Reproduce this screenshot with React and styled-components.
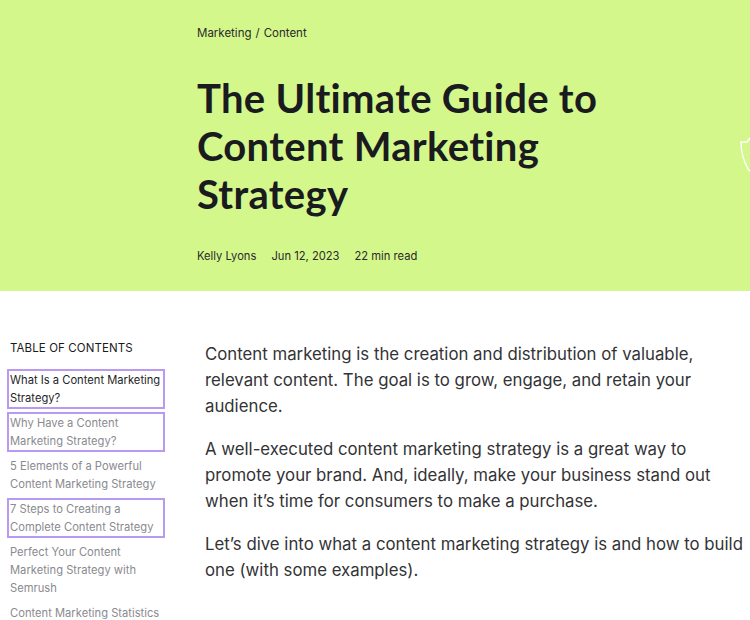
import styled, { createGlobalStyle } from "styled-components";

const GlobalStyle = createGlobalStyle`
  body {
    margin: 0;
    background: #fff;
    font-family: Inter, "Noto Sans", sans-serif;
    overflow: hidden;
  }
`;

const Hero = styled.header`
  position: relative;
  height: 291px;
  background: #d4f78c;
  padding: 26px 0 0 197px;
  box-sizing: border-box;
  overflow: hidden;
`;

const Breadcrumb = styled.div`
  font-size: 11.5px;
  color: #2a2a2a;
  display: flex;
  gap: 4px;
`;

const Title = styled.h1`
  margin: 34px 0 0;
  font-family: Lato, Inter, sans-serif;
  font-weight: 700;
  font-size: 40px;
  line-height: 48px;
  color: #1a1b1f;
  width: 460px;
  letter-spacing: 0.3px;
`;

const Meta = styled.div`
  margin-top: 31px;
  display: flex;
  gap: 15px;
  font-size: 11.2px;
  color: #2a2a2a;
`;

const Decoration = styled.svg`
  position: absolute;
  right: 0;
  top: 136px;
`;

const Main = styled.main`
  display: grid;
  grid-template-columns: 158px 1fr;
  gap: 40px;
  padding: 50px 0 0 7px;
`;

const TocTitle = styled.div`
  font-size: 11.5px;
  color: #1a1a1a;
  letter-spacing: 0.1px;
  padding-left: 3px;
  margin-bottom: 14px;
`;

const TocList = styled.ul`
  list-style: none;
  margin: 0;
  padding: 0;
  display: flex;
  flex-direction: column;
  gap: 3px;
`;

const TocItem = styled.li`
  font-size: 11.2px;
  line-height: 18px;
  color: ${(p) => (p.$active ? "#1f1f1f" : "#8a8a8f")};
  padding: 0 1px;
  border: 2px solid ${(p) => (p.$boxed ? "#b99af2" : "transparent")};
`;

const Article = styled.article`
  padding-top: 0;
`;

const Paragraph = styled.p`
  margin: 0 0 17px;
  font-size: 16.8px;
  line-height: 26px;
  color: #333336;
  max-width: 542px;
`;

const toc = [
  { text: "What Is a Content Marketing Strategy?", active: true, boxed: true },
  { text: "Why Have a Content Marketing Strategy?", boxed: true },
  { text: "5 Elements of a Powerful Content Marketing Strategy" },
  { text: "7 Steps to Creating a Complete Content Strategy", boxed: true },
  { text: "Perfect Your Content Marketing Strategy with Semrush" },
  { text: "Content Marketing Statistics" },
];

export default function App() {
  return (
    <>
      <GlobalStyle />
      <Hero>
        <Breadcrumb>
          <span>Marketing</span>
          <span>/</span>
          <span>Content</span>
        </Breadcrumb>
        <Title>The Ultimate Guide to Content Marketing Strategy</Title>
        <Meta>
          <span>Kelly Lyons</span>
          <span>Jun 12, 2023</span>
          <span>22 min read</span>
        </Meta>
        <Decoration width="10" height="40" viewBox="0 0 10 40">
          <path
            d="M10 2 L7 6 L1 6 Q1 20 8 33 L10 35"
            fill="none"
            stroke="#fff"
            strokeWidth="1.4"
          />
        </Decoration>
      </Hero>
      <Main>
        <nav>
          <TocTitle>TABLE OF CONTENTS</TocTitle>
          <TocList>
            {toc.map((item) => (
              <TocItem key={item.text} $active={item.active} $boxed={item.boxed}>
                {item.text}
              </TocItem>
            ))}
          </TocList>
        </nav>
        <Article>
          <Paragraph>
            Content marketing is the creation and distribution of valuable,
            relevant content. The goal is to grow, engage, and retain your
            audience.
          </Paragraph>
          <Paragraph>
            A well-executed content marketing strategy is a great way to
            promote your brand. And, ideally, make your business stand out
            when it’s time for consumers to make a purchase.
          </Paragraph>
          <Paragraph>
            Let’s dive into what a content marketing strategy is and how to
            build one (with some examples).
          </Paragraph>
        </Article>
      </Main>
    </>
  );
}
